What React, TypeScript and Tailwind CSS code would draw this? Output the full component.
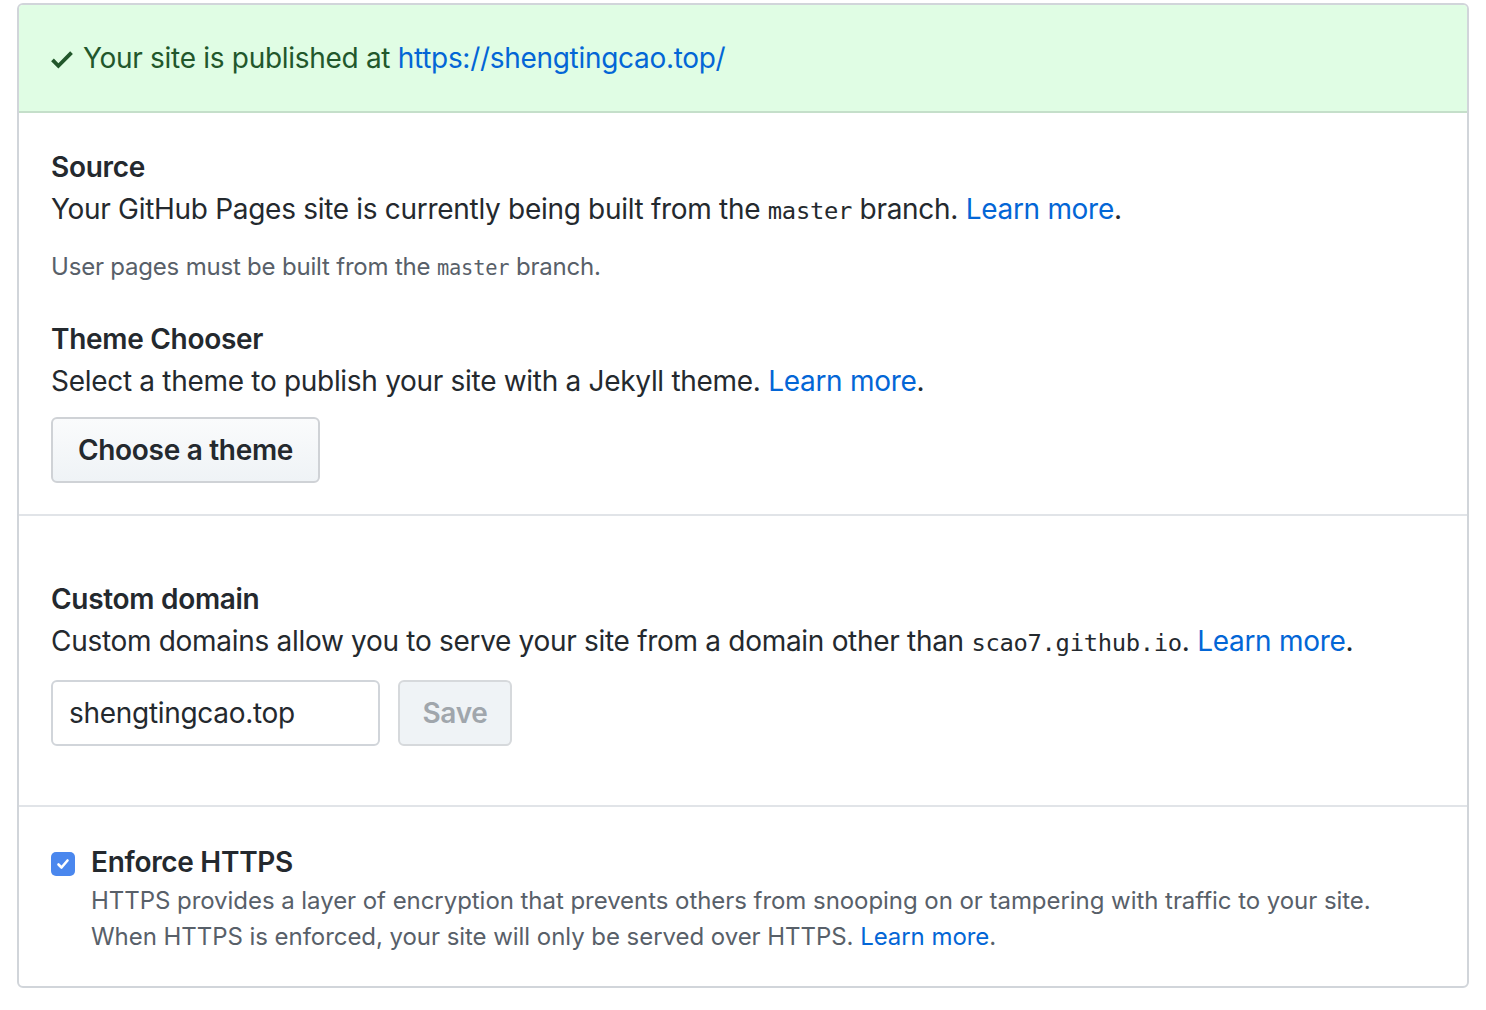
import React from "react";

const sans = { fontFamily: "Inter, 'Noto Sans', 'Liberation Sans', sans-serif" } as React.CSSProperties;

function Mono({ children }: { children: React.ReactNode }) {
  return <code className="font-['DejaVu_Sans_Mono',monospace] text-[0.85em]">{children}</code>;
}

function Link({ children }: { children: React.ReactNode }) {
  return <a className="text-[#0366d6]">{children}</a>;
}

export default function App() {
  return (
    <div className="bg-white w-[1486px] h-[1010px] pt-[3px] pl-[17px]" style={sans}>
      <div className="w-[1452px] border-2 border-[#d1d5da] rounded-[6px] overflow-hidden text-[#24292e]">
        <div className="bg-[#e0fde4] border-b-2 border-[#c5dfca] h-[108px] px-[32px] flex items-center text-[28px] text-[#22572b] tracking-[-0.3px]">
          <svg width="22" height="29" viewBox="0 0 12 16" className="mr-[10px] mt-[2px] shrink-0" fill="#22572b">
            <path fillRule="evenodd" d="M12 5l-8 8-4-4 1.5-1.5L4 10l6.5-6.5L12 5z" />
          </svg>
          <span>
            Your site is published at <Link>https://shengtingcao.top/</Link>
          </span>
        </div>

        <div className="px-[32px] pt-[33px] pb-[31px] border-b-2 border-[#e1e4e8]">
          <h2 className="text-[28px] font-semibold leading-[42px] tracking-[-0.3px]">Source</h2>
          <p className="text-[28px] leading-[42px] tracking-[-0.3px]">
            Your GitHub Pages site is currently being built from the <Mono>master</Mono> branch. <Link>Learn more</Link>.
          </p>
          <p className="text-[24px] leading-[36px] text-[#586069] mt-[17px] tracking-[-0.2px]">
            User pages must be built from the <Mono>master</Mono> branch.
          </p>
          <h2 className="text-[28px] font-semibold leading-[42px] mt-[32px] tracking-[-0.3px]">Theme Chooser</h2>
          <p className="text-[28px] leading-[42px] tracking-[-0.3px]">
            Select a theme to publish your site with a Jekyll theme. <Link>Learn more</Link>.
          </p>
          <button className="mt-[15px] h-[66px] w-[269px] rounded-[6px] border-2 border-[#cfd2d6] bg-gradient-to-b from-[#fafbfc] to-[#eff3f6] text-[28px] font-semibold tracking-[-0.3px] text-[#24292e]">
            Choose a theme
          </button>
        </div>

        <div className="px-[32px] pt-[62px] pb-[59px] border-b-2 border-[#e1e4e8]">
          <h2 className="text-[28px] font-semibold leading-[42px] tracking-[-0.3px]">Custom domain</h2>
          <p className="text-[28px] leading-[42px] tracking-[-0.3px]">
            Custom domains allow you to serve your site from a domain other than <Mono>scao7.github.io</Mono>. <Link>Learn more</Link>.
          </p>
          <div className="flex gap-[18px] mt-[16px]">
            <div className="h-[66px] w-[329px] border-2 border-[#d1d5da] rounded-[6px] px-[16px] flex items-center text-[28px] tracking-[-0.3px]">
              shengtingcao.top
            </div>
            <button className="h-[66px] w-[114px] rounded-[6px] border-2 border-[#d6d9dc] bg-[#eff3f6] text-[28px] font-semibold text-[#a0a6ac] tracking-[-0.3px]">
              Save
            </button>
          </div>
        </div>

        <div className="px-[32px] pt-[34px] pb-[31px] flex gap-[16px]">
          <div className="w-[24px] h-[24px] rounded-[5px] bg-[#4a87ee] flex items-center justify-center mt-[11px] shrink-0">
            <svg width="16" height="16" viewBox="0 0 16 16" fill="none" stroke="white" strokeWidth="2.6" strokeLinecap="round" strokeLinejoin="round">
              <path d="M3.5 8.5l3 3 6-7" />
            </svg>
          </div>
          <div>
            <h3 className="text-[28px] font-semibold leading-[42px] tracking-[-0.3px]">Enforce HTTPS</h3>
            <p className="text-[24px] leading-[36px] text-[#586069] tracking-[-0.05px]">
              HTTPS provides a layer of encryption that prevents others from snooping on or tampering with traffic to your site.
              <br />
              When HTTPS is enforced, your site will only be served over HTTPS. <Link>Learn more</Link>.
            </p>
          </div>
        </div>
      </div>
    </div>
  );
}
